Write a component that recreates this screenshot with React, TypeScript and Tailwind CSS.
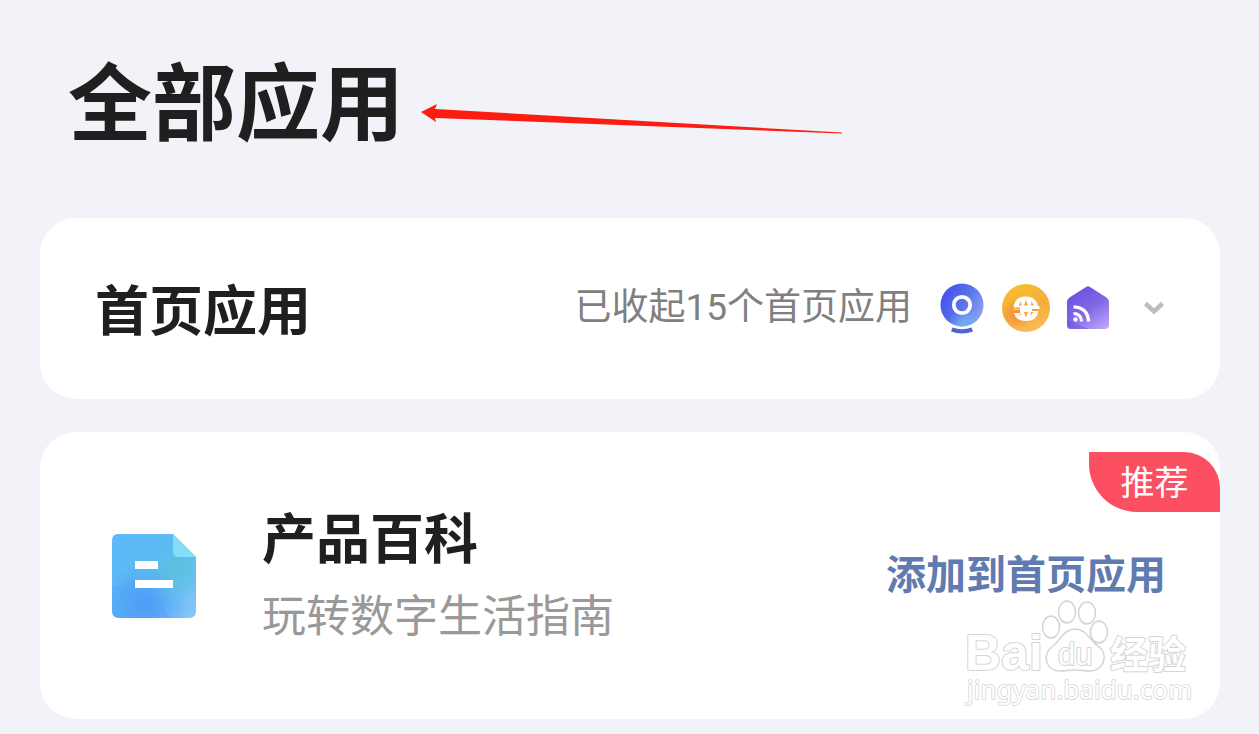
import React from "react";

function CameraIcon() {
  return (
    <svg viewBox="0 0 48 54" className="h-[54px] w-12" aria-hidden="true">
      <defs>
        <linearGradient id="cam" x1="0" y1="0.2" x2="1" y2="0.7">
          <stop offset="0" stopColor="#434df0" />
          <stop offset="0.55" stopColor="#5b74ea" />
          <stop offset="1" stopColor="#8ba3f4" />
        </linearGradient>
        <radialGradient id="camGlow" cx="0.55" cy="1" r="0.4">
          <stop offset="0" stopColor="#6fb5f0" />
          <stop offset="1" stopColor="#6fb5f0" stopOpacity="0" />
        </radialGradient>
      </defs>
      <circle cx="24" cy="24" r="21.5" fill="url(#cam)" />
      <circle cx="24" cy="24" r="21.5" fill="url(#camGlow)" />
      <circle cx="24" cy="24" r="8.2" fill="none" stroke="#fff" strokeWidth="3.8" />
      <path d="M14.500 46.500Q24 50 33.500 46.500L35 50.500Q24 54.500 13 50.500Z" fill="#4b66cf" />
    </svg>
  );
}

function GlobeIcon() {
  return (
    <svg viewBox="0 0 50 50" className="size-[50px]" aria-hidden="true">
      <defs>
        <linearGradient id="globe" x1="0.2" y1="0" x2="0.6" y2="1">
          <stop offset="0" stopColor="#f8c02f" />
          <stop offset="0.55" stopColor="#f4ad3b" />
          <stop offset="1" stopColor="#fbbb58" />
        </linearGradient>
        <radialGradient id="globeShade" cx="0.32" cy="0.62" r="0.32">
          <stop offset="0" stopColor="#f18c38" />
          <stop offset="1" stopColor="#f18c38" stopOpacity="0" />
        </radialGradient>
      </defs>
      <circle cx="25" cy="25" r="24" fill="url(#globe)" />
      <circle cx="25" cy="25" r="24" fill="url(#globeShade)" />
      <path d="M12.500 24Q14 13.500 25 13.500Q35 13.500 37 23H38.500V26H37.500Q37 38 25 38Q15 38 13 30H19V27H12.500Z" fill="#fff" />
      <g fill="#f3a63f">
        <path d="M17.500 22.500L20 18.500L20.500 22.500ZM23 22.500L25 17L27 22.500ZM30 22.500L30.500 18.500L33 22.500Z" />
        <path d="M23 29L25 34.500L27 29ZM30 29L29.500 33L32.500 29ZM18 30.500L20 33L19.800 30.500Z" />
        <path d="M31 26H38V28H31ZM12 24.500H19V26.500H12Z" />
      </g>
    </svg>
  );
}

function HomeIcon() {
  return (
    <svg viewBox="0 0 44 46" className="h-[46px] w-11" aria-hidden="true">
      <defs>
        <linearGradient id="home" x1="0.25" y1="0" x2="0.9" y2="1">
          <stop offset="0" stopColor="#6a4fdf" />
          <stop offset="0.5" stopColor="#8068e4" />
          <stop offset="1" stopColor="#bea4fb" />
        </linearGradient>
      </defs>
      <path
        d="M20 2Q22 0.500 24 2L40.500 12.500Q43 14 43 17V40Q43 44 39 44H5Q1 44 1 40V17Q1 14 3.500 12.500Z"
        fill="url(#home)"
      />
      <path d="M1 35q12 5 22 9H5q-4 0-4-4z" fill="#694bd8" opacity="0.45" />
      <circle cx="9.500" cy="34.500" r="2.200" fill="#fff" />
      <g fill="none" stroke="#fff" strokeWidth="3.200">
        <path d="M7.500 28.500q7.500 0 8 8" />
        <path d="M7.500 21.800q14.500.7 15 14.700" />
      </g>
    </svg>
  );
}

function DocumentIcon() {
  return (
    <svg viewBox="0 0 84 84" className="size-[84px] shrink-0" aria-hidden="true">
      <defs>
        <linearGradient id="doc" x1="0" y1="0" x2="1" y2="0.9">
          <stop offset="0" stopColor="#5bb8fb" />
          <stop offset="0.6" stopColor="#5ebbee" />
          <stop offset="1" stopColor="#86c4fa" />
        </linearGradient>
        <radialGradient id="docBlue" cx="0.4" cy="0.85" r="0.5">
          <stop offset="0" stopColor="#4e9df8" />
          <stop offset="1" stopColor="#4e9df8" stopOpacity="0" />
        </radialGradient>
        <radialGradient id="docTeal" cx="0.8" cy="0.45" r="0.35">
          <stop offset="0" stopColor="#5cc2e0" />
          <stop offset="1" stopColor="#5cc2e0" stopOpacity="0" />
        </radialGradient>
        <clipPath id="docShape">
          <path d="M6 0H61L84 23V77Q84 84 77 84H7Q0 84 0 77V7Q0 0 6 0Z" />
        </clipPath>
      </defs>
      <g clipPath="url(#docShape)">
        <path d="M0 0H84V84H0Z" fill="url(#doc)" />
        <path d="M0 53Q14 51 22 44Q45 60 58 84H0Z" fill="#4e9ff8" opacity="0.3" />
        <path d="M0 0H84V84H0Z" fill="url(#docBlue)" />
        <path d="M0 0H84V84H0Z" fill="url(#docTeal)" />
        <path d="M61 0L84 23H67Q61 23 61 17Z" fill="#83def6" />
      </g>
      <path d="M23 27H46V35H23ZM23 46H61V54H23Z" fill="#fff" />
    </svg>
  );
}

function Watermark() {
  return (
    <svg
      viewBox="0 0 240 116"
      className="pointer-events-none absolute right-6 bottom-2 h-[116px] w-60"
      role="img"
      aria-label="Baidu 经验 jingyan.baidu.com"
    >
      <g fill="#fff" stroke="#d4d4d4" strokeWidth="1.500" strokeLinejoin="round">
        <ellipse cx="95" cy="32" rx="8.500" ry="11" />
        <ellipse cx="111" cy="17" rx="8.500" ry="11" />
        <ellipse cx="131" cy="18" rx="8.500" ry="11" />
        <ellipse cx="143" cy="37" rx="8.500" ry="11" />
        <path d="M119 34C130 34 134 45 142 51C154 60 147 76 134 76C128 76 125 75 119 75C113 75 110 76 104 76C90 76 85 60 97 51C105 45 108 34 119 34Z" />
        <g className="font-['Liberation_Sans','Noto_Sans_CJK_SC',sans-serif]" strokeWidth="2" paintOrder="stroke">
          <text x="9" y="75" fontSize="50" fontWeight="700">Bai</text>
          <text x="102" y="70" fontSize="31">du</text>
          <text x="154" y="73" fontSize="38" fontWeight="700">经验</text>
        </g>
        <text x="11" y="104" fontSize="26" className="font-['Noto_Sans',sans-serif]" stroke="#d4d4d4" paintOrder="stroke">
          jingyan.baidu.com
        </text>
      </g>
    </svg>
  );
}

export default function App() {
  return (
    <main className="min-h-screen bg-[#f2f3f8] pr-[39px] pb-[15px] pl-10 font-['Noto_Sans_CJK_SC',sans-serif] text-[#1f1f1f]">
      <header className="flex h-[218px] items-start gap-4 pt-[38px] pl-7">
        <h1 className="text-[84px] leading-[120px] font-bold">全部应用</h1>
        <svg viewBox="0 0 424 34" className="mt-[63px] h-[34px] w-[424px]" aria-hidden="true">
          <path d="M1 11L17 3L15 8L422 31.500V32.500L15 17L16 21Z" fill="#fb1d12" />
        </svg>
      </header>

      <section className="flex h-[181px] items-center justify-between rounded-[36px] bg-white pr-[50px] pb-[2px] pl-[55px]">
        <h2 className="text-[54px] leading-[72px] font-bold">首页应用</h2>
        <div className="flex items-center">
          <p className="mr-[26px] font-['Roboto','Noto_Sans_CJK_SC',sans-serif] text-[37px] leading-[54px] text-[#808080]">
            已收起15个首页应用
          </p>
          <div className="flex items-center gap-[15px]">
            <CameraIcon />
            <GlobeIcon />
            <HomeIcon />
          </div>
          <button type="button" aria-label="展开首页应用" className="ml-7 flex h-12 w-8 items-center justify-center">
            <svg viewBox="0 0 24 16" className="h-4 w-6" aria-hidden="true">
              <path d="M3.500 3.500L12 11.500L20.500 3.500" fill="none" stroke="#bdbdbd" strokeWidth="4.500" />
            </svg>
          </button>
        </div>
      </section>

      <section className="relative mt-[33px] flex h-[287px] items-center rounded-[36px] bg-white pr-[54px] pl-[72px]">
        <DocumentIcon />
        <div className="ml-[66px] pb-[6px]">
          <h2 className="text-[54px] leading-[80px] font-bold">产品百科</h2>
          <p className="text-[44px] leading-[74px] text-[#999999]">玩转数字生活指南</p>
        </div>
        <button type="button" className="ml-auto pb-2 text-[40px] leading-[60px] font-bold text-[#5f7bb0]">
          添加到首页应用
        </button>
        <span className="absolute top-5 right-0 flex h-[60px] w-[131px] items-center justify-center rounded-tr-[36px] rounded-bl-[48px] bg-[#fc5062] pb-[2px] text-[34px] leading-[58px] text-white">
          推荐
        </span>
        <Watermark />
      </section>
    </main>
  );
}
